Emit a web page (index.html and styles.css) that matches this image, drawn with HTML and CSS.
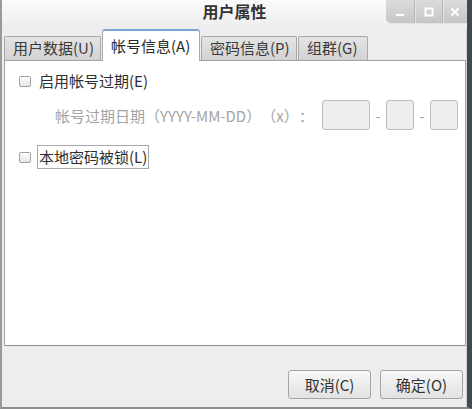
FILE: index.html
```html
<!DOCTYPE html>
<html lang="zh-CN">
<head>
<meta charset="utf-8">
<title>用户属性</title>
<link rel="stylesheet" href="styles.css">
</head>
<body>
<div class="window">
  <div class="titlebar">
    <div class="title-spacer"></div>
    <div class="title">用户属性</div>
    <div class="controls">
      <div class="ctl"><svg width="10" height="10" viewBox="0 0 10 10"><rect x="1" y="7" width="8" height="2" fill="#fff"/></svg></div>
      <div class="ctl"><svg width="10" height="10" viewBox="0 0 10 10"><rect x="1.5" y="1.5" width="7" height="7" fill="none" stroke="#fff" stroke-width="2"/></svg></div>
      <div class="ctl"><svg width="10" height="10" viewBox="0 0 10 10"><path d="M1.5 1.5 L8.5 8.5 M8.5 1.5 L1.5 8.5" stroke="#fff" stroke-width="2"/></svg></div>
    </div>
  </div>
  <div class="tabrow">
    <div class="tab">用户数据(U)</div>
    <div class="tab active">帐号信息(A)</div>
    <div class="tab">密码信息(P)</div>
    <div class="tab">组群(G)</div>
  </div>
  <div class="panel">
    <div class="row row1">
      <span class="check"></span>
      <span class="label">启用帐号过期(E)</span>
    </div>
    <div class="row daterow">
      <span class="datelabel">帐号过期日期（YYYY-MM-DD）（x）：</span>
      <span class="field wide"></span>
      <span class="dash">-</span>
      <span class="field"></span>
      <span class="dash">-</span>
      <span class="field"></span>
    </div>
    <div class="row row2">
      <span class="check"></span>
      <span class="label focus">本地密码被锁(L)</span>
    </div>
  </div>
  <div class="actions">
    <button class="btn">取消(C)</button>
    <button class="btn">确定(O)</button>
  </div>
</div>
</body>
</html>
```

FILE: styles.css
```css
* { box-sizing: border-box; }
html, body { margin: 0; padding: 0; }
body {
  width: 472px;
  height: 409px;
  overflow: hidden;
  font-family: "Noto Sans CJK SC", "Noto Sans", sans-serif;
  font-size: 15px;
  color: #2e2e2e;
  background: #3c4653;
  text-spacing-trim: space-all;
}
.window {
  width: 472px;
  height: 409px;
  display: flex;
  flex-direction: column;
  background: #ededed;
  border-left: 2px solid #9a9a9a;
  border-bottom: 2px solid #8e8e8e;
  border-right: 5px solid #3f4954;
  box-shadow: inset -1px 0 0 #d9cfd3;
}
.titlebar {
  height: 29px;
  flex: none;
  display: grid;
  grid-template-columns: 1fr auto 1fr;
  background: linear-gradient(#fbfbfb, #ececec);
}
.title {
  font-weight: bold;
  font-size: 16px;
  line-height: 22px;
  color: #333;
}
.controls {
  justify-self: end;
  display: flex;
  height: 23px;
  background: linear-gradient(#dcdcdc, #c6c6c6);
  border-bottom-left-radius: 5px;
  box-shadow: 0 1px 0 #e4e4e4;
}
.ctl {
  width: 28px;
  display: flex;
  align-items: center;
  justify-content: center;
  border-left: 1px solid #b8b8b8;
  box-shadow: inset 1px 0 0 #e2e2e2;
}
.ctl:first-child { border-left: none; box-shadow: none; width: 28px; }
.ctl:last-child { width: 25px; }
.tabrow {
  height: 31px;
  flex: none;
  display: flex;
  align-items: flex-end;
  padding-left: 2px;
  position: relative;
  z-index: 1;
}
.tab {
  height: 24px;
  padding: 0 8px;
  margin-right: 1px;
  line-height: 22px;
  color: #3a3a3a;
  background: linear-gradient(#e4e4e4, #d2d2d2);
  border: 1px solid #a9a9a9;
  border-bottom: none;
  border-radius: 2px 2px 0 0;
  white-space: nowrap;
}
.tab:first-child { width: 97px; }
.tab.active {
  height: 32px;
  width: 98px;
  margin-bottom: -1px;
  padding: 0 8px;
  line-height: 30px;
  background: #fff;
  border-color: #a9a9a9;
  border-top: 2px solid #7aa6d6;
  border-radius: 3px 3px 0 0;
  color: #2a2a2a;
}
.tab:nth-child(3) { width: 96px; }
.tab:nth-child(4) { width: 70px; }
.panel {
  height: 286px;
  flex: none;
  margin: 0 1px 0 2px;
  background: #fff;
  border: 1px solid #a3a3a3;
  border-bottom-color: #8e8e8e;
  display: flex;
  flex-direction: column;
  padding: 10px 0 0 14px;
}
.row {
  display: flex;
  align-items: center;
}
.row1 { height: 20px; }
.check {
  width: 12px;
  height: 11px;
  border: 1px solid #a2a2a2;
  border-radius: 2px;
  background: linear-gradient(#fdfdfd, #e6e6e6);
  margin-right: 7px;
  flex: none;
}
.label { line-height: 20px; padding-left: 1px; white-space: nowrap; }
.daterow {
  height: 30px;
  margin-top: 9px;
  padding-left: 36px;
}
.datelabel {
  color: #a4a4a4;
  width: 267px;
  white-space: nowrap;
  overflow: hidden;
}
.field {
  width: 28px;
  height: 30px;
  border: 1px solid #bdbdbd;
  border-radius: 3px;
  background: #eeeeee;
  flex: none;
}
.field.wide { width: 48px; }
.dash {
  width: 16px;
  text-align: center;
  color: #a4a4a4;
}
.row2 {
  height: 24px;
  margin-top: 15px;
}
.row2 .check { margin-right: 6px; }
.focus {
  border: 1px solid #a8a8a8;
  padding: 0 1px;
  line-height: 22px;
  height: 24px;
}
.actions {
  flex: 1;
  display: flex;
  justify-content: flex-end;
  align-items: flex-start;
  gap: 9px;
  padding: 24px 4px 0 0;
}
.btn {
  width: 83px;
  height: 29px;
  font-family: inherit;
  font-size: 15px;
  color: #333;
  background: linear-gradient(#f7f7f7, #e2e2e2);
  border: 1px solid #a4a4a4;
  border-radius: 3px;
  padding: 0;
}
```
